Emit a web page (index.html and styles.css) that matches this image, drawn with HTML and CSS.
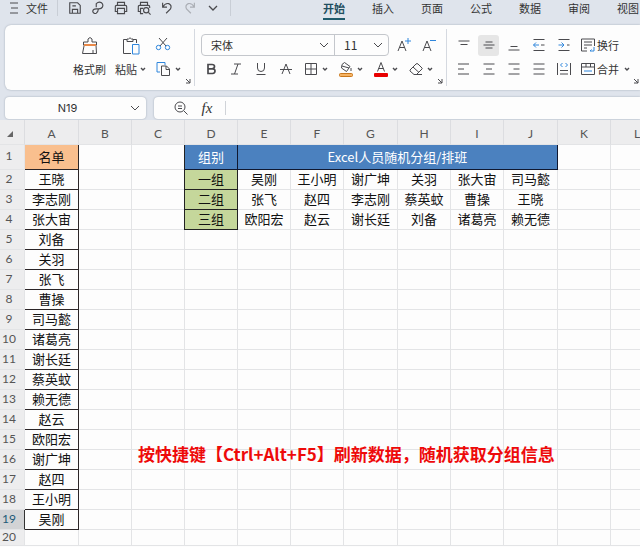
FILE: index.html
```html
<!DOCTYPE html>
<html lang="zh-CN">
<head>
<meta charset="utf-8">
<title>Excel人员随机分组</title>
<link rel="stylesheet" href="styles.css">
</head>
<body>
<svg class="defs" aria-hidden="true">
  <symbol id="chev" viewBox="0 0 10 10"><path d="M1 3l4 4 4-4"/></symbol>
  <symbol id="drop" viewBox="0 0 6 6"><path d="M1 2l2 2 2-2" stroke-width="1.4"/></symbol>
  <symbol id="launch" viewBox="0 0 6 6"><path d="M1 1l4 4M5 1v4H1"/></symbol>
</svg>
<div class="app">
  <header class="menubar">
    <button class="file"><svg viewBox="0 0 16 16"><path d="M4 3h8M5 8h7M4 13h8"/></svg>文件</button>
    <div class="quick">
      <button aria-label="保存"><svg viewBox="0 0 16 16"><path d="M2 2h9l3 3v9H2zM5 14V9.500h6V14M5 5.500h4"/></svg></button>
      <button aria-label="输出"><svg viewBox="0 0 16 16"><path d="M6 7V3q3-3 6-1 2.500 2 1 5-1 2-4 2H6q-4 0-4 3 1 3 4 2 2-1 2.500-5"/></svg></button>
      <button aria-label="打印"><svg viewBox="0 0 16 16"><path d="M4 5V1.500h8V5M4 12H1.500V6.500q0-1.500 1.500-1.500h10q1.500 0 1.500 1.500V12H12M4 8.500h8V14.500H4z"/></svg></button>
      <button aria-label="打印预览"><svg viewBox="0 0 16 16"><path d="M4 5V1.500h8V5M4 12H1.500V6.500q0-1.500 1.500-1.500h10q1.500 0 1.500 1.500V8M7 14.500H4V8.500H7M13 13l2.500 2.500"/><circle cx="10.500" cy="10.500" r="3"/></svg></button>
      <button aria-label="撤销"><svg viewBox="0 0 16 16"><path d="M3 2v5h5M3 7q3-5 7-4 4 2 2 6l-5 5"/></svg></button>
      <button aria-label="恢复" class="off"><svg viewBox="0 0 16 16"><path d="M13 2v5H8M13 7Q10 2 6 3 2 5 4 9l5 5"/></svg></button>
      <button aria-label="更多"><svg class="s10"><use href="#chev"/></svg></button>
    </div>
    <nav class="tabs">
      <a href="#" class="on">开始</a><a href="#">插入</a><a href="#">页面</a><a href="#">公式</a><a href="#">数据</a><a href="#">审阅</a><a href="#">视图</a>
    </nav>
  </header>

  <section class="ribbon">
    <div class="group clip">
      <button class="big"><svg viewBox="0 0 20 20"><path d="M3.500 9V6h4.500V3q2-3 4 0v3h4.500v3M4 9v1l-1.500 7.500h14L16 9M13 14v3.500"/><path class="orange" d="M4 9h12"/></svg><span>格式刷</span></button>
      <button class="big"><svg viewBox="0 0 20 20"><path d="M10 17.500H2.500V3.500H6M12 3.500h3.500V7M6 5.500V3h1.500q1.500-2.500 3 0H12v2.500z"/><path class="blue" d="M11.500 8.500h6.500v9.500h-6.500z"/></svg><span>粘贴<svg class="s6"><use href="#drop"/></svg></span></button>
      <div class="stack">
        <button aria-label="剪切"><svg viewBox="0 0 16 16"><path d="M4 2l7 8M12 2l-7 8"/><circle class="blue" cx="3.500" cy="11.500" r="2.200"/><circle class="blue" cx="12.500" cy="11.500" r="2.200"/></svg></button>
        <button aria-label="复制"><svg viewBox="0 0 16 16"><path class="blue" d="M5 11H2V1.500h8V4"/><path d="M6.500 5h5l3 3v6.500h-8zM11 5v3.500h3.500"/></svg><svg class="s6"><use href="#drop"/></svg></button>
      </div>
      <button class="more" aria-label="剪贴板设置"><svg class="s6"><use href="#launch"/></svg></button>
    </div>

    <div class="group font">
      <div class="row">
        <div class="combos">
          <label class="combo wide"><select aria-label="字体"><option>宋体</option></select><svg class="s10"><use href="#chev"/></svg></label>
          <label class="combo"><select aria-label="字号"><option>11</option></select><svg class="s10"><use href="#chev"/></svg></label>
        </div>
        <button class="ic" aria-label="增大字号"><svg viewBox="0 0 16 16"><path d="M2 14L6 4l4 10M3.500 10.500h5"/><path class="blue" d="M9 4h6M12 1v6"/></svg></button>
        <button class="ic" aria-label="减小字号"><svg viewBox="0 0 16 16"><path d="M2 14L6 4l4 10M3.500 10.500h5"/><path class="blue" d="M9 3.500h6"/></svg></button>
      </div>
      <div class="row tools">
        <button class="ic" aria-label="加粗"><svg viewBox="0 0 16 16"><path stroke-width="1.700" d="M5 3.500h4q2.500 0 2.500 2T9 7.800H5h4.500q2.500 0 2.500 2.200t-2.500 2.500H5z"/></svg></button>
        <button class="ic" aria-label="倾斜"><svg viewBox="0 0 16 16"><path d="M6 3h7M3 13h7M10 3L6.500 13"/></svg></button>
        <button class="ic" aria-label="下划线"><svg viewBox="0 0 16 16"><path d="M4.500 2v5q0 3.500 3.500 3.500T11.500 7V2M3.500 13.500h9"/></svg></button>
        <button class="ic" aria-label="删除线"><svg viewBox="0 0 16 16"><path d="M4 13l4-10 4 10M2 8.500h12"/></svg></button>
        <button class="split" aria-label="边框"><svg viewBox="0 0 16 16"><path d="M2.500 2.500h11v11h-11zM8 2.500v11M2.500 8h11"/></svg><svg class="s6"><use href="#drop"/></svg></button>
        <button class="split" aria-label="填充颜色"><svg viewBox="0 0 16 16"><path d="M4 3.500l2.500-2 5.500 4-3.500 5-5-3.500zM4 5l7 2M13 7v3"/><rect class="fillc" x="1.500" y="12.500" width="13" height="3" rx="1"/></svg><svg class="s6"><use href="#drop"/></svg></button>
        <button class="split" aria-label="字体颜色"><svg viewBox="0 0 16 16"><path d="M4.500 10.500L8 1.500l3.500 9M5.500 7.500h5"/><rect class="redc" x="1" y="12" width="14" height="4" rx="1"/></svg><svg class="s6"><use href="#drop"/></svg></button>
        <button class="split" aria-label="清除"><svg viewBox="0 0 16 16"><path d="M2 9l6-6q1-1 2 0l4 4q.500.500 0 1l-5.500 5.500H6L2 10zM5 6l6 5.500M8 13.500h6"/></svg><svg class="s6"><use href="#drop"/></svg></button>
      </div>
      <button class="more" aria-label="字体设置"><svg class="s6"><use href="#launch"/></svg></button>
    </div>

    <div class="group align">
      <div class="row">
        <button class="ic" aria-label="顶端对齐"><svg viewBox="0 0 16 16"><path d="M2.500 4h11M4.500 7.500h7"/></svg></button>
        <button class="ic sel" aria-label="垂直居中"><svg viewBox="0 0 16 16"><path d="M4.500 5h7M2.500 8h11M4.500 11h7"/></svg></button>
        <button class="ic" aria-label="底端对齐"><svg viewBox="0 0 16 16"><path d="M4.500 9.500h7M2.500 13h11"/></svg></button>
        <button class="ic" aria-label="减少缩进"><svg viewBox="0 0 16 16"><path d="M2.500 2.500h11M10 8h3.500M2.500 13.500h11"/><path class="blue" d="M2.500 8H8M5 5.500L2.500 8 5 10.500"/></svg></button>
        <button class="ic" aria-label="增加缩进"><svg viewBox="0 0 16 16"><path d="M2.500 2.500h11M11 8h2.500M2.500 13.500h11"/><path class="blue" d="M2.500 8H8M5.500 5.500L8 8l-2.500 2.500"/></svg></button>
        <button class="txt"><svg viewBox="0 0 16 16"><path d="M7 14H1.500V2h13v7M4 5h8M4 8h8M4 11h3"/><path class="blue" d="M14 10v4H10l1.500-1.500"/></svg>换行</button>
      </div>
      <div class="row">
        <button class="ic" aria-label="左对齐"><svg viewBox="0 0 16 16"><path d="M2 3h11M2 8h6M2 13h11"/></svg></button>
        <button class="ic" aria-label="水平居中"><svg viewBox="0 0 16 16"><path d="M2.500 3h11M5 8h6M2.500 13h11"/></svg></button>
        <button class="ic" aria-label="右对齐"><svg viewBox="0 0 16 16"><path d="M2.500 3h11M7.500 8h6M2.500 13h11"/></svg></button>
        <button class="ic" aria-label="两端对齐"><svg viewBox="0 0 16 16"><path d="M2.500 3h11M2.500 8h11M2.500 13h11"/></svg></button>
        <button class="ic" aria-label="分散对齐"><svg viewBox="0 0 16 16"><path d="M1.500 2v12M14.500 2v12M4 9.500h8M4 13h8"/><path class="blue" d="M6.500 2l-2 2 2 2M9.500 2l2 2-2 2"/></svg></button>
        <button class="txt"><svg viewBox="0 0 16 16"><path d="M1.500 2.500h13v11h-13zM1.500 6h13M6 2.500V6M10.500 2.500V6"/><path class="blue" d="M4 10h8"/></svg>合并<svg class="s6"><use href="#drop"/></svg></button>
      </div>
      <button class="more" aria-label="对齐设置"><svg class="s6"><use href="#launch"/></svg></button>
    </div>
  </section>

  <section class="formula">
    <label class="namebox"><input aria-label="名称框" value="N19"><svg class="s10"><use href="#chev"/></svg></label>
    <div class="fbar">
      <button aria-label="查找"><svg viewBox="0 0 16 16"><circle cx="7" cy="7" r="5"/><path d="M11 11l3.500 3.500M5 6h4M5 8.500h4"/></svg></button>
      <button class="fx" aria-label="插入函数">fx</button>
      <input aria-label="编辑栏">
    </div>
  </section>

  <main class="sheet">
    <table>
      <colgroup><col class="cn"><col class="cw"><col><col><col><col><col><col class="cw"><col><col><col class="cw"><col><col></colgroup>
      <thead><tr><th class="corner"><th>A<th>B<th>C<th>D<th>E<th>F<th>G<th>H<th>I<th>J<th>K<th>L</tr></thead>
      <tbody>
      <tr class="first"><th>1<td class="n peach">名单<td><td><td class="head">组别<td class="head" colspan="6">Excel人员随机分组/排班<td><td></tr>
      <tr><th>2<td class="n">王晓<td><td><td class="g">一组<td>吴刚<td>王小明<td>谢广坤<td>关羽<td>张大宙<td>司马懿<td><td></tr>
      <tr><th>3<td class="n">李志刚<td><td><td class="g">二组<td>张飞<td>赵四<td>李志刚<td>蔡英蚊<td>曹操<td>王晓<td><td></tr>
      <tr><th>4<td class="n">张大宙<td><td><td class="g">三组<td>欧阳宏<td>赵云<td>谢长廷<td>刘备<td>诸葛亮<td>赖无德<td><td></tr>
      <tr><th>5<td class="n">刘备<td><td><td><td><td><td><td><td><td><td><td></tr>
      <tr><th>6<td class="n">关羽<td><td><td><td><td><td><td><td><td><td><td></tr>
      <tr><th>7<td class="n">张飞<td><td><td><td><td><td><td><td><td><td><td></tr>
      <tr><th>8<td class="n">曹操<td><td><td><td><td><td><td><td><td><td><td></tr>
      <tr><th>9<td class="n">司马懿<td><td><td><td><td><td><td><td><td><td><td></tr>
      <tr><th>10<td class="n">诸葛亮<td><td><td><td><td><td><td><td><td><td><td></tr>
      <tr><th>11<td class="n">谢长廷<td><td><td><td><td><td><td><td><td><td><td></tr>
      <tr><th>12<td class="n">蔡英蚊<td><td><td><td><td><td><td><td><td><td><td></tr>
      <tr><th>13<td class="n">赖无德<td><td><td><td><td><td><td><td><td><td><td></tr>
      <tr><th>14<td class="n">赵云<td><td><td><td><td><td><td><td><td><td><td></tr>
      <tr><th>15<td class="n">欧阳宏<td><td><td><td><td><td><td><td><td><td><td></tr>
      <tr><th>16<td class="n">谢广坤<td><td><td><td><td><td><td><td><td><td><td></tr>
      <tr><th>17<td class="n">赵四<td><td><td><td><td><td><td><td><td><td><td></tr>
      <tr><th>18<td class="n">王小明<td><td><td><td><td><td><td><td><td><td><td></tr>
      <tr class="cur"><th>19<td class="n">吴刚<td><td><td><td><td><td><td><td><td><td><td></tr>
      <tr class="last"><th>20<td><td><td><td><td><td><td><td><td><td><td><td></tr>
      </tbody>
    </table>
    <p class="note">按快捷键【Ctrl+Alt+F5】刷新数据，随机获取分组信息</p>
  </main>
</div>
</body>
</html>
```
FILE: styles.css
```css
* { box-sizing: border-box; }
body {
  margin: 0;
  overflow: hidden;
  font: 11px/16px "Noto Sans CJK SC", sans-serif;
  color: #333;
}
button, input, select {
  font: inherit;
  color: inherit;
  border: 0;
  padding: 0;
  margin: 0;
  background: none;
  outline: none;
}
button { display: flex; align-items: center; justify-content: center; flex: none; white-space: nowrap; }
svg { width: 16px; height: 16px; flex: none; fill: none; stroke: #4a4a4e; stroke-width: 1; }
.defs { position: absolute; width: 0; height: 0; }
.s10 { width: 10px; height: 10px; }
.s6 { width: 6px; height: 6px; }
.blue { stroke: #2f86dc; }
.orange { stroke: #e8894a; stroke-width: 2; }
.fillc { fill: #f5b364; stroke: #c9771c; }
.redc { fill: #e80000; stroke: none; }

.app { display: flex; flex-direction: column; height: 100vh; background: #dfe4ec; }

.menubar { display: flex; height: 25px; padding: 0 0 9px 6px; flex: none; align-items: center; }
.file { gap: 4px; padding-right: 9px; border-right: 1px solid #c9ced6; height: 16px; }
.quick { display: flex; padding: 0 6px 0 5px; border-right: 1px solid #c9ced6; height: 16px; align-items: center; }
.quick button { width: 23px; }
.quick svg { width: 14px; height: 14px; stroke-width: 1.3; }
.quick .s10 { width: 10px; height: 10px; }
.quick .off { opacity: 0.35; }
.tabs { display: flex; gap: 27px; padding-left: 92px; flex: none; }
.tabs a { color: #333; text-decoration: none; height: 20px; margin-top: 4px; white-space: nowrap; }
.tabs .on { font-weight: 700; color: #1f4e5f; border-bottom: 2px solid #1f5a6b; }

.ribbon {
  display: flex;
  flex: none;
  height: 65px;
  margin-left: 5px;
  padding: 4px 0;
  background: #fdfdfd;
  border-radius: 6px 0 0 6px;
  box-shadow: 0 0 2px #9aa3b0;
}
.group { position: relative; display: flex; flex: none; }
.group + .group { border-left: 1px solid #d5d9e0; }
.more { position: absolute; right: 3px; bottom: 2px; }
.clip { width: 189px; padding-left: 68px; gap: 9px; }
.big { flex-direction: column; justify-content: flex-start; gap: 6px; padding-top: 7px; }
.big > svg { width: 20px; height: 20px; }
.big span { display: flex; align-items: center; gap: 3px; line-height: 14px; }
.stack { display: flex; flex-direction: column; gap: 9px; padding-top: 7px; }
.stack button { gap: 4px; align-self: flex-start; }
.font { width: 252px; flex-direction: column; gap: 2px; padding: 5px 0 0 6px; }
.row { display: flex; align-items: center; height: 22px; }
.tools { margin-left: -3px; }
.combos {
  display: flex;
  width: 188px;
  height: 22px;
  margin-right: 2px;
  border: 1px solid #c4c7cc;
  border-radius: 4px;
}
.combo { display: flex; align-items: center; flex: 1; padding: 0 5px 0 9px; }
.combo.wide { flex: none; width: 133px; border-right: 1px solid #c4c7cc; }
.combo select { appearance: none; flex: 1; min-width: 0; font-size: 12px; }
.combo.wide select { font-size: 11px; }
.ic { width: 21px; height: 21px; margin: 0 2px; }
.sel { background: #e6e6e6; border-radius: 3px; }
.split { width: 35px; height: 21px; gap: 3px; }
.align { flex: 1 0 194px; flex-direction: column; gap: 2px; padding: 5px 0 0 4px; }
.txt { gap: 1px; margin-left: 4px; }
.txt .s6 { margin-left: 4px; }
.align .more { right: 1px; }

.formula { display: flex; gap: 8px; flex: none; padding: 7px 0 1px 5px; }
.namebox, .fbar {
  display: flex;
  align-items: center;
  height: 22px;
  background: #fdfdfd;
  border-radius: 4px;
  box-shadow: 0 0 2px #9aa3b0;
}
.namebox { width: 141px; padding-right: 6px; }
.namebox input { flex: 1; min-width: 0; text-align: center; font: 11px/16px Inter, sans-serif; }
.fbar { flex: 1; padding-left: 19px; border-radius: 4px 0 0 4px; }
.fbar input { flex: 1; min-width: 0; border-left: 1px solid #d0d3d8; height: 14px; }
.fx { font: italic 15px/18px "Liberation Serif", serif; width: 36px; }

.sheet { position: relative; flex: 1; min-height: 0; overflow: hidden; background: #fdfdfd; }
table { table-layout: fixed; width: 664px; border-spacing: 0; }
col { width: 53px; }
.cn { width: 25px; }
.cw { width: 54px; }
th, td { height: 20px; padding: 0 0 2px; overflow: hidden; text-align: center; white-space: nowrap; border: 0 solid #e3e4e6; border-width: 0 1px 1px 0; }
th { background: #ededee; font: 12px/16px Lato, sans-serif; color: #555; }
tbody th { padding-right: 6px; }
td { font-size: 13px; line-height: 17px; color: #111; }
thead th { height: 25px; padding: 4px 0 0; border-right-color: #dcdde0; }
.corner::after { content: ""; display: block; margin-left: 7px; border: solid transparent; border-width: 0 0 6px 6px; border-bottom-color: #666; width: 0; }
.first td { height: 25px; }
.n { border-color: #2b2527; }
.peach { background: #f9bf8e; }
.first .head { background: #4b81bf; color: #fff; border-color: #101830; }
.g { background: #c5d79b; border-color: #222; }
tr .head:nth-child(5), tr .g { box-shadow: -1px 0 #222; overflow: visible; }
.cur th { background: #d2d3d5; color: #1d5a78; border-right-color: #333; }
.last th, .last td { height: 16px; line-height: 13px; }
.note {
  position: absolute;
  left: 138px;
  top: 321px;
  margin: 0;
  font: 700 17px/26px "Noto Sans CJK SC", sans-serif;
  color: #ee0a0a;
  white-space: nowrap;
}
```
